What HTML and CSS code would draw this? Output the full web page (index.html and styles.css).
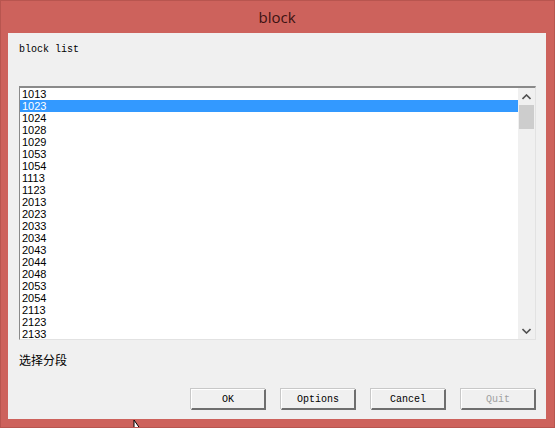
FILE: index.html
```html
<!DOCTYPE html>
<html>
<head>
<meta charset="utf-8">
<link rel="stylesheet" href="styles.css">
</head>
<body>
<div class="window">
  <div class="titlebar">block</div>
  <div class="client">
    <div class="label">block list</div>
    <div class="listbox">
      <div class="items">
        <div class="item">1013</div>
        <div class="item selected">1023</div>
        <div class="item">1024</div>
        <div class="item">1028</div>
        <div class="item">1029</div>
        <div class="item">1053</div>
        <div class="item">1054</div>
        <div class="item">1113</div>
        <div class="item">1123</div>
        <div class="item">2013</div>
        <div class="item">2023</div>
        <div class="item">2033</div>
        <div class="item">2034</div>
        <div class="item">2043</div>
        <div class="item">2044</div>
        <div class="item">2048</div>
        <div class="item">2053</div>
        <div class="item">2054</div>
        <div class="item">2113</div>
        <div class="item">2123</div>
        <div class="item">2133</div>
      </div>
      <div class="scrollbar">
        <div class="arrow">
          <svg width="9" height="6" viewBox="0 0 9 6"><path d="M0.5 5 L4.5 1 L8.5 5" fill="none" stroke="#505050" stroke-width="1.6"/></svg>
        </div>
        <div class="thumb"></div>
        <div class="track"></div>
        <div class="arrow">
          <svg width="9" height="6" viewBox="0 0 9 6"><path d="M0.5 1 L4.5 5 L8.5 1" fill="none" stroke="#505050" stroke-width="1.6"/></svg>
        </div>
      </div>
    </div>
    <div class="cnlabel">选择分段</div>
    <div class="buttons">
      <div class="btn">OK</div>
      <div class="btn">Options</div>
      <div class="btn">Cancel</div>
      <div class="btn disabled">Quit</div>
    </div>
  </div>
  <svg class="cursor" width="12" height="10" viewBox="0 0 12 10"><path d="M1 0 L1 10 L8 10 Z" fill="#fff" stroke="#000" stroke-width="1"/></svg>
</div>
</body>
</html>
```
FILE: styles.css
```css
html, body {
  margin: 0;
  padding: 0;
  background: #cd625c;
}
.window {
  position: relative;
  width: 555px;
  height: 428px;
  box-sizing: border-box;
  background: #cd625c;
  border: 1px solid #b8554f;
  padding: 0 8px 8px 7px;
  display: flex;
  flex-direction: column;
  overflow: hidden;
}
.titlebar {
  height: 32px;
  line-height: 33px;
  text-align: center;
  font-family: "Open Sans", "Noto Sans", sans-serif;
  font-size: 15px;
  color: #3c1212;
}
.client {
  flex: 1;
  background: #f0f0f0;
  padding: 11px 10px 0 11px;
  display: flex;
  flex-direction: column;
}
.label {
  font-family: "Liberation Mono", monospace;
  font-size: 10px;
  line-height: 12px;
  height: 12px;
  color: #000;
}
.listbox {
  margin-top: 30px;
  height: 254px;
  box-sizing: border-box;
  border-top: 2px solid #8a8a8a;
  border-left: 1px solid #8a8a8a;
  border-right: 1px solid #e2e2e2;
  border-bottom: 1px solid #e2e2e2;
  background: #fff;
  display: flex;
}
.items {
  flex: 1;
  padding-top: 0;
  font-family: "Liberation Sans", Arial, sans-serif;
  font-size: 11px;
  color: #000;
}
.item {
  height: 12px;
  line-height: 12px;
  padding-left: 2px;
}
.item.selected {
  background: #3399ff;
  color: #fff;
}
.scrollbar {
  width: 17px;
  background: #f0f0f0;
  display: flex;
  flex-direction: column;
}
.arrow {
  height: 17px;
  display: flex;
  align-items: center;
  justify-content: center;
}
.thumb {
  margin: 0 1px;
  height: 24px;
  background: #cdcdcd;
}
.track {
  flex: 1;
}
.cnlabel {
  margin-top: 13px;
  font-family: "Noto Sans CJK SC", sans-serif;
  font-size: 12px;
  line-height: 14px;
  height: 14px;
  color: #000;
}
.buttons {
  margin-top: 22px;
  display: flex;
  justify-content: flex-end;
  gap: 15px;
}
.btn {
  width: 75px;
  height: 21px;
  box-sizing: border-box;
  background: #f0f0f0;
  border-top: 1px solid #ffffff;
  border-left: 1px solid #ffffff;
  border-right: 2px solid #6e6e6e;
  border-bottom: 2px solid #6e6e6e;
  box-shadow: -1px -1px 0 #c8c8c8;
  text-align: center;
  font-family: "Liberation Mono", monospace;
  font-size: 10px;
  line-height: 20px;
  color: #000;
}
.btn.disabled {
  color: #a0a0a0;
}
.cursor {
  position: absolute;
  left: 132px;
  top: 419px;
}
```
